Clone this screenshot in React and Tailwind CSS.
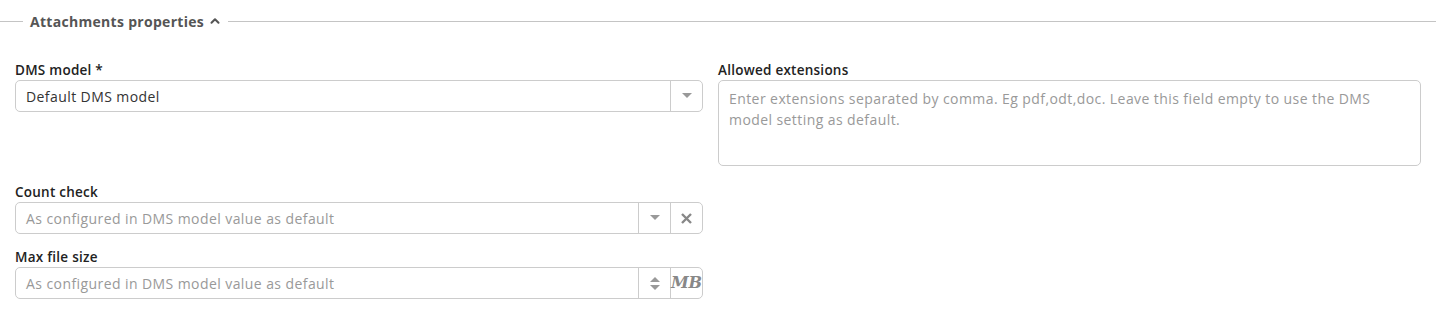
import React from 'react';
import { ChevronUp } from 'lucide-react';

const font = { fontFamily: '"Open Sans", "Liberation Sans", sans-serif' };

const Caret = () => (
    <svg width="10" height="6" viewBox="0 0 10 6" className="fill-[#999]">
        <path d="M0 0h10L5 5z" />
    </svg>
);

const Label = ({ children }) => (
    <label className="block text-[13.5px] font-semibold tracking-[0.25px] text-[#222] leading-[20px] pt-[1px]">{children}</label>
);

const App = () => {
    return (
        <div className="w-[1436px] h-[309px] bg-white" style={font}>
            {/* Section legend */}
            <div className="flex items-center h-[42px]">
                <div className="w-[23px] h-px bg-[#c4c4c4]" />
                <div className="flex items-center gap-[4px] pl-[7px] pr-[6px]">
                    <span className="text-[14px] font-bold tracking-[0.3px] text-[#555]">Attachments properties</span>
                    <ChevronUp size={14} strokeWidth={3.5} className="text-[#555]" />
                </div>
                <div className="flex-1 h-px bg-[#c4c4c4]" />
            </div>

            <div className="grid grid-cols-2 px-[15px] pt-[17px] tracking-[0.42px]">
                {/* Left column */}
                <div className="pr-[15px]">
                    <Label>DMS model *</Label>
                    <div className="flex h-[32px] border border-[#ccc] rounded-[5px] items-stretch">
                        <div className="flex-1 flex items-center px-[10px] text-[14px] text-[#333]">Default DMS model</div>
                        <div className="w-[32px] border-l border-[#ccc] flex items-center justify-center"><Caret /></div>
                    </div>

                    <div className="mt-[69px]">
                        <Label>Count check</Label>
                        <div className="flex h-[32px] border border-[#ccc] rounded-[5px] items-stretch">
                            <div className="flex-1 flex items-center px-[10px] text-[14px] text-[#999]">As configured in DMS model value as default</div>
                            <div className="w-[32px] border-l border-[#ccc] flex items-center justify-center"><Caret /></div>
                            <div className="w-[32px] border-l border-[#ccc] flex items-center justify-center">
                                <svg width="11" height="11" viewBox="0 0 11 11" className="stroke-[#888]" strokeWidth="2.4">
                                    <path d="M1 1l9 9M10 1l-9 9" />
                                </svg>
                            </div>
                        </div>
                    </div>

                    <div className="mt-[12px]">
                        <Label>Max file size</Label>
                        <div className="flex h-[32px] border border-[#ccc] rounded-[5px] items-stretch">
                            <div className="flex-1 flex items-center px-[10px] text-[14px] text-[#999]">As configured in DMS model value as default</div>
                            <div className="w-[32px] border-l border-[#ccc] flex flex-col items-center justify-center gap-[3px]">
                                <svg width="10" height="5" viewBox="0 0 10 5" className="fill-[#999]"><path d="M0 5h10L5 0z" /></svg>
                                <svg width="10" height="5" viewBox="0 0 10 5" className="fill-[#999]"><path d="M0 0h10L5 5z" /></svg>
                            </div>
                            <div className="w-[32px] border-l border-[#ccc] flex items-center justify-center text-[16px] tracking-normal italic font-bold text-[#888]" style={{ fontFamily: '"DejaVu Serif", serif' }}>MB</div>
                        </div>
                    </div>
                </div>

                {/* Right column */}
                <div>
                    <Label>Allowed extensions</Label>
                    <div className="h-[86px] border border-[#ccc] rounded-[5px] px-[10px] py-[7px] text-[14px] leading-[21px] text-[#999]">
                        Enter extensions separated by comma. Eg pdf,odt,doc. Leave this field empty to use the DMS model setting as default.
                    </div>
                </div>
            </div>
        </div>
    );
};

export default App;
